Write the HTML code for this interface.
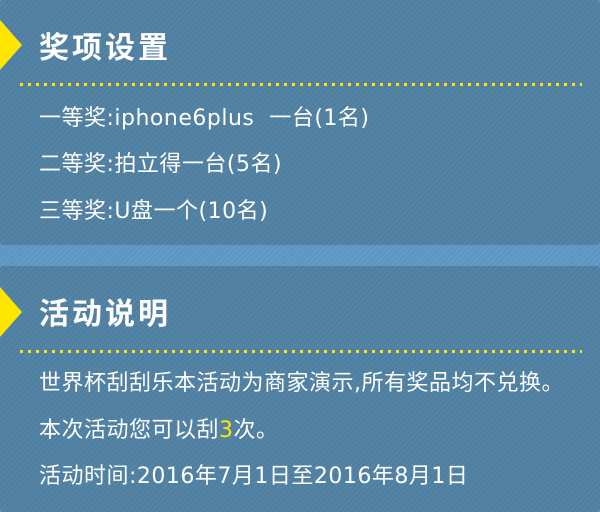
<!DOCTYPE html><html><head><meta charset="utf-8"><style>
body{margin:0;width:600px;height:512px;overflow:hidden;background:#5b97c2;font-family:"DejaVu Sans","Noto Sans CJK SC",sans-serif;color:#fff;}
.p{position:absolute;left:0;width:600px;background:#4f7fa1 repeating-linear-gradient(135deg,rgba(255,255,255,.06) 0 1px,transparent 1px 4px);border-radius:3px;}
.bg{position:absolute;left:0;top:0;width:600px;height:512px;background:repeating-linear-gradient(135deg,rgba(255,255,255,.08) 0 1px,transparent 1px 4px);}
.tri{position:absolute;left:0;width:0;height:0;border-top:25px solid transparent;border-bottom:25px solid transparent;border-left:22px solid #ffe600;}
.t{position:absolute;left:39px;font-size:30px;font-weight:bold;line-height:34px;letter-spacing:3px;font-family:"Noto Sans CJK SC",sans-serif;}
.d{position:absolute;left:20px;width:562px;height:3px;background:repeating-linear-gradient(90deg,#ffe600 0 3px,transparent 3px 8px);}
.l{position:absolute;left:39px;font-size:22px;line-height:26px;white-space:pre;letter-spacing:0.5px;}
</style></head><body>
<div class="bg"></div>
<div class="p" style="top:0;height:245px"></div>
<div class="p" style="top:266px;height:246px"></div>
<div class="tri" style="top:20px"></div>
<div class="t" style="top:28px">奖项设置</div>
<div class="d" style="top:83px"></div>
<div class="l" style="top:106px">一等奖:iphone6plus  一台(1名)</div>
<div class="l" style="top:152px">二等奖:拍立得一台(5名)</div>
<div class="l" style="top:199px">三等奖:U盘一个(10名)</div>
<div class="tri" style="top:287px"></div>
<div class="t" style="top:294px">活动说明</div>
<div class="d" style="top:350px"></div>
<div class="l" style="top:371px">世界杯刮刮乐本活动为商家演示,所有奖品均不兑换。</div>
<div class="l" style="top:418px">本次活动您可以刮<span style="color:#ffe600">3</span>次。</div>
<div class="l" style="top:464px">活动时间:2016年7月1日至2016年8月1日</div>
</body></html>
